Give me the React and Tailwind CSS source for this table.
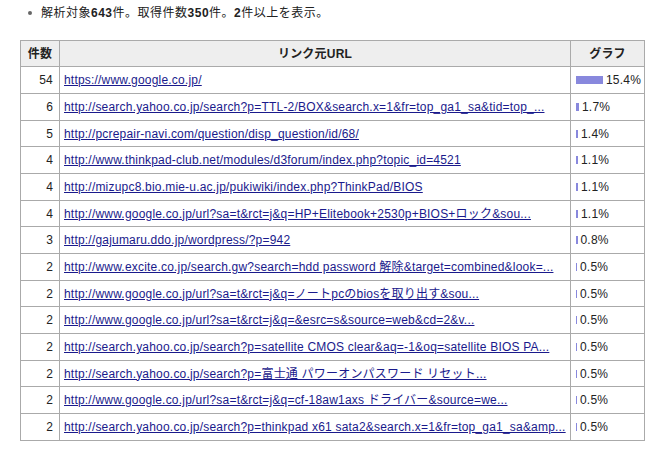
import React from 'react';

const rows = [
  { n: 54, url: 'https://www.google.co.jp/', pct: '15.4%', w: 27 },
  { n: 6, url: 'http://search.yahoo.co.jp/search?p=TTL-2/BOX&search.x=1&fr=top_ga1_sa&tid=top_...', pct: '1.7%', w: 3 },
  { n: 5, url: 'http://pcrepair-navi.com/question/disp_question/id/68/', pct: '1.4%', w: 2 },
  { n: 4, url: 'http://www.thinkpad-club.net/modules/d3forum/index.php?topic_id=4521', pct: '1.1%', w: 2 },
  { n: 4, url: 'http://mizupc8.bio.mie-u.ac.jp/pukiwiki/index.php?ThinkPad/BIOS', pct: '1.1%', w: 2 },
  { n: 4, url: 'http://www.google.co.jp/url?sa=t&rct=j&q=HP+Elitebook+2530p+BIOS+ロック&sou...', pct: '1.1%', w: 2 },
  { n: 3, url: 'http://gajumaru.ddo.jp/wordpress/?p=942', pct: '0.8%', w: 1.5 },
  { n: 2, url: 'http://www.excite.co.jp/search.gw?search=hdd password 解除&target=combined&look=...', pct: '0.5%', w: 1 },
  { n: 2, url: 'http://www.google.co.jp/url?sa=t&rct=j&q=ノートpcのbiosを取り出す&sou...', pct: '0.5%', w: 1 },
  { n: 2, url: 'http://www.google.co.jp/url?sa=t&rct=j&q=&esrc=s&source=web&cd=2&v...', pct: '0.5%', w: 1 },
  { n: 2, url: 'http://search.yahoo.co.jp/search?p=satellite CMOS clear&aq=-1&oq=satellite BIOS PA...', pct: '0.5%', w: 1 },
  { n: 2, url: 'http://search.yahoo.co.jp/search?p=富士通 パワーオンパスワード リセット...', pct: '0.5%', w: 1 },
  { n: 2, url: 'http://www.google.co.jp/url?sa=t&rct=j&q=cf-18aw1axs ドライバー&source=we...', pct: '0.5%', w: 1 },
  { n: 2, url: 'http://search.yahoo.co.jp/search?p=thinkpad x61 sata2&search.x=1&fr=top_ga1_sa&amp...', pct: '0.5%', w: 1 },
];

export default function App() {
  return (
    <div className="w-[656px] h-[451px] bg-white text-[12px] text-[#222] font-['Liberation_Sans','Noto_Sans_CJK_JP',sans-serif]">
      <div className="flex items-center h-[24px] pl-[28px] pt-[1px]">
        <span className="w-[4px] h-[4px] rounded-full bg-[#666] mr-[9px]"></span>
        <span className="tracking-[0.5px]">
          解析対象<b>643</b>件。取得件数<b>350</b>件。<b>2</b>件以上を表示。
        </span>
      </div>
      <table className="ml-[20px] mt-[16px] w-[624px] border-collapse table-fixed tracking-[0.2px]">
        <colgroup>
          <col className="w-[39px]" />
          <col className="w-[511px]" />
          <col className="w-[74px]" />
        </colgroup>
        <thead>
          <tr className="h-[26px] bg-[#eeeeee]">
            <th className="border border-[#aaaaaa] font-bold text-center p-0">件数</th>
            <th className="border border-[#aaaaaa] font-bold text-center p-0">リンク元URL</th>
            <th className="border border-[#aaaaaa] font-bold text-center p-0">グラフ</th>
          </tr>
        </thead>
        <tbody>
          {rows.map((r, i) => (
            <tr key={i} className={i % 3 === 2 ? 'h-[26px]' : 'h-[27px]'}>
              <td className="border border-[#aaaaaa] text-right pr-[6px] p-0">{r.n}</td>
              <td className="border border-[#aaaaaa] pl-[4px] p-0 whitespace-nowrap overflow-hidden">
                <a href="#" className="text-[#1a1a8c] underline">{r.url}</a>
              </td>
              <td className="border border-[#aaaaaa] pl-[5px] p-0">
                <div className="flex items-center">
                  <span className="inline-block h-[8px] bg-[#8888dd]" style={{ width: r.w }}></span>
                  <span className="ml-[3px]">{r.pct}</span>
                </div>
              </td>
            </tr>
          ))}
        </tbody>
      </table>
    </div>
  );
}
